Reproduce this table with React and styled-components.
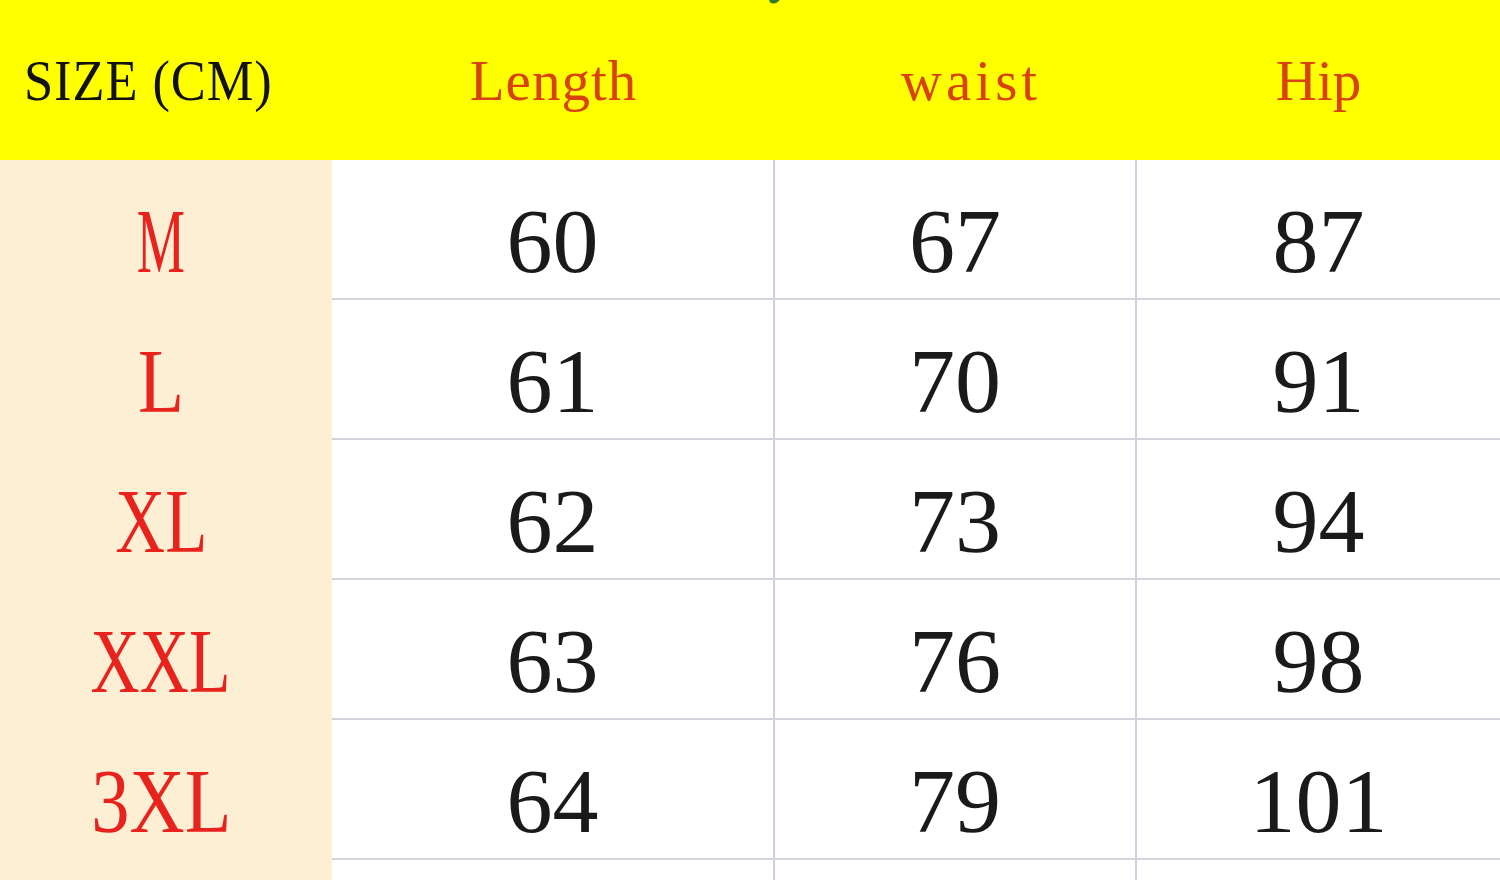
import React from "react";
import styled, { createGlobalStyle } from "styled-components";

const Global = createGlobalStyle`
  html, body { margin: 0; padding: 0; background: #ffffff; }
  body { width: 1500px; height: 880px; overflow: hidden; }
`;

const Chart = styled.div`
  position: relative;
  width: 1500px;
  height: 880px;
  display: grid;
  grid-template-columns: 332px 443px 362px 363px;
  grid-template-rows: 160px repeat(5, 140px) 20px;
  background: #ffffff;
  overflow: hidden;
`;

const HeadCell = styled.div`
  background: #ffff00;
  display: flex;
  align-items: center;
  justify-content: ${(p) => (p.$left ? "flex-start" : "center")};
  padding-left: ${(p) => p.$pl || 0}px;
  box-sizing: border-box;
`;

const HeadText = styled.span`
  display: inline-block;
  font-family: "Liberation Serif", serif;
  font-size: 57px;
  line-height: 1;
  color: ${(p) => p.$color};
  letter-spacing: ${(p) => p.$spacing || 0}px;
  transform: scaleX(${(p) => p.$squeeze || 1});
  transform-origin: ${(p) => (p.$left ? "left center" : "center")};
  white-space: pre;
`;

const LabelCell = styled.div`
  background: #fdefd4;
  display: flex;
  align-items: flex-start;
  justify-content: center;
  padding-top: 35px;
  padding-right: 10px;
  box-sizing: border-box;
`;

const Label = styled.span`
  display: inline-block;
  font-family: "Liberation Serif", serif;
  font-size: 92px;
  line-height: 1;
  color: #e8221c;
  transform: scaleX(${(p) => p.$squeeze});
`;

const ValueCell = styled.div`
  background: #ffffff;
  display: flex;
  align-items: flex-start;
  justify-content: center;
  padding-top: 35px;
  box-sizing: border-box;
  border-bottom: ${(p) => (p.$noBottom ? "none" : "2px solid #d3d3dc")};
  border-right: ${(p) => (p.$last ? "none" : "2px solid #cfcfe6")};
`;

const Value = styled.span`
  font-family: "Liberation Serif", serif;
  font-size: 92px;
  line-height: 1;
  color: #1a1a1a;
`;

const Leaf = styled.svg`
  position: absolute;
  left: 766px;
  top: -6px;
`;

const rows = [
  { size: "M", squeeze: 0.59, vals: ["60", "67", "87"] },
  { size: "L", squeeze: 0.82, vals: ["61", "70", "91"] },
  { size: "XL", squeeze: 0.75, vals: ["62", "73", "94"] },
  { size: "XXL", squeeze: 0.74, vals: ["63", "76", "98"] },
  { size: "3XL", squeeze: 0.83, vals: ["64", "79", "101"] },
];

export default function App() {
  return (
    <>
      <Global />
      <Chart>
        <HeadCell $left $pl={24}>
          <HeadText $left $color="#121212" $squeeze={0.92} $spacing={1}>
            SIZE (CM)
          </HeadText>
        </HeadCell>
        <HeadCell>
          <HeadText $color="#d8420e" $spacing={1}>Length</HeadText>
        </HeadCell>
        <HeadCell $pl={30}>
          <HeadText $color="#d8420e" $spacing={4}>waist</HeadText>
        </HeadCell>
        <HeadCell>
          <HeadText $color="#d8420e">Hip</HeadText>
        </HeadCell>

        {rows.map((r) => (
          <React.Fragment key={r.size}>
            <LabelCell>
              <Label $squeeze={r.squeeze}>{r.size}</Label>
            </LabelCell>
            {r.vals.map((v, i) => (
              <ValueCell key={i} $last={i === 2}>
                <Value>{v}</Value>
              </ValueCell>
            ))}
          </React.Fragment>
        ))}

        <LabelCell />
        <ValueCell $noBottom />
        <ValueCell $noBottom />
        <ValueCell $noBottom $last />

        <Leaf width="18" height="12" viewBox="0 0 18 12">
          <ellipse cx="9" cy="5" rx="6" ry="4" fill="#2f7a1e" transform="rotate(-30 9 5)" />
        </Leaf>
      </Chart>
    </>
  );
}
